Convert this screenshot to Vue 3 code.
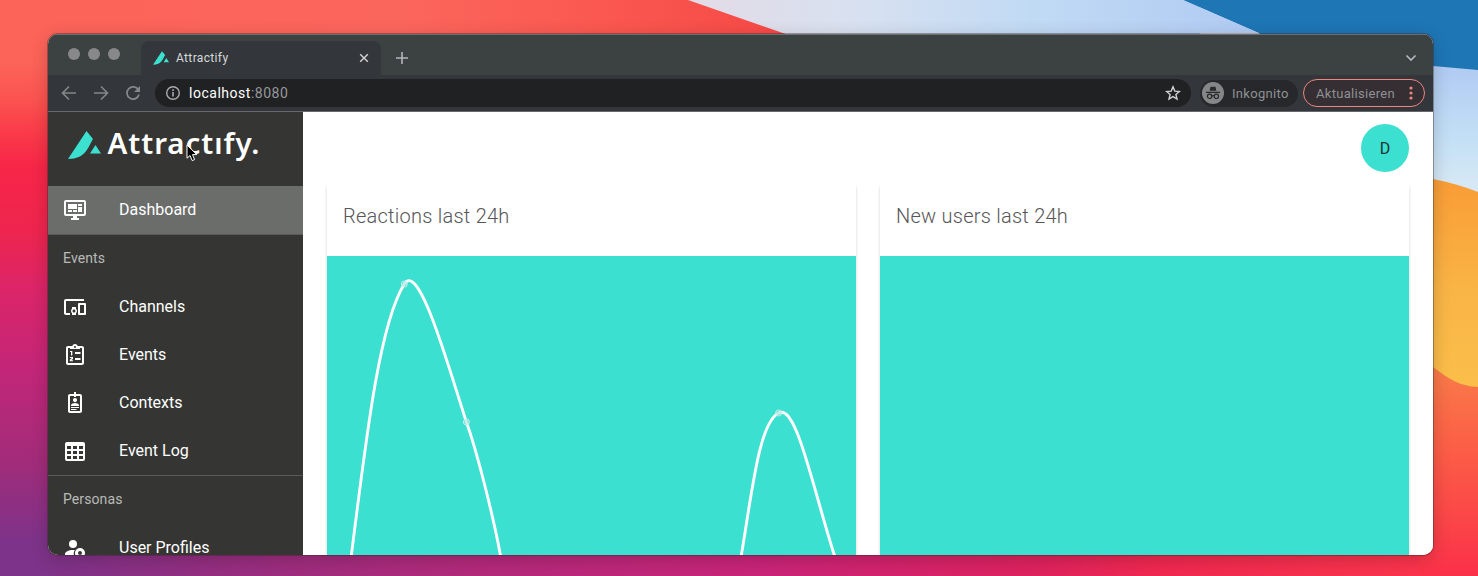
<script setup>
const icons = {
  dashboard: 'M21,16V4H3V16H21M21,2A2,2 0 0,1 23,4V16A2,2 0 0,1 21,18H14V20H16V22H8V20H10V18H3C1.89,18 1,17.1 1,16V4C1,2.89 1.89,2 3,2H21M5,6H14V11H5V6M15,6H19V8H15V6M19,9V14H15V9H19M5,12H9V14H5V12M10,12H14V14H10V12Z',
  channels: 'M3 6h18V4H3c-1.1 0-2 .9-2 2v12c0 1.1.9 2 2 2h4v-2H3V6zm10 6H9v1.78c-.61.55-1 1.33-1 2.22s.39 1.67 1 2.22V20h4v-1.78c.61-.55 1-1.34 1-2.22s-.39-1.67-1-2.22V12zm-2 5.5c-.83 0-1.5-.67-1.5-1.5s.67-1.5 1.5-1.5 1.5.67 1.5 1.5-.67 1.5-1.5 1.5zM22 8h-6c-.5 0-1 .5-1 1v10c0 .5.5 1 1 1h6c.5 0 1-.5 1-1V9c0-.5-.5-1-1-1zm-1 10h-4v-8h4v8z',
  events: 'M19 3h-4.2a3 3 0 0 0-5.6 0H5c-1.1 0-2 .9-2 2v15c0 1.1.9 2 2 2h14c1.1 0 2-.9 2-2V5c0-1.1-.9-2-2-2zm-7 0a1 1 0 1 1 0 2 1 1 0 0 1 0-2zm7 17H5V5h2v1h10V5h2v15zM12 9h5.5v2H12zM12 15h5.5v2H12zM7 8h2.3v4.5H8V9H7zM6.8 14h3.2v2l-1.8 1.2H10v1H6.8v-1.5L8.8 15h-2z',
  contexts: 'M17 3h-4V1h-2v2H7c-1.1 0-2 .9-2 2v15c0 1.1.9 2 2 2h10c1.1 0 2-.9 2-2V5c0-1.1-.9-2-2-2zm0 17H7V5h4v1h2V5h4v15zM12 7a2.1 2.1 0 1 0 0 4.2A2.1 2.1 0 0 0 12 7zM8 14.2c0-1.5 2.7-2.2 4-2.2s4 .7 4 2.2V15H8zM8 16h8v1H8zM8 18h5.5v1H8z',
  log: 'M4 3h16a2 2 0 0 1 2 2v15a2 2 0 0 1-2 2H4a2 2 0 0 1-2-2V5c0-1.1.9-2 2-2zm0 4v3h4V7zm6 0v3h4V7zm6 0v3h4V7zM4 12v3h4v-3zm6 0v3h4v-3zm6 0v3h4v-3zM4 17v3h4v-3zm6 0v3h4v-3zm6 0v3h4v-3z',
  profiles: 'M10 4a4 4 0 1 0 0 8 4 4 0 0 0 0-8zM17 12a5 5 0 1 0 0 10 5 5 0 0 0 0-10zm0 3a2 2 0 1 1 0 4 2 2 0 0 1 0-4zM10 14c-4.4 0-8 1.8-8 4v2h9.1a7 7 0 0 1 .7-5.9z',
}
const eventItems = [
  { label: 'Channels', icon: icons.channels },
  { label: 'Events', icon: icons.events },
  { label: 'Contexts', icon: icons.contexts },
  { label: 'Event Log', icon: icons.log },
]
const points = [[404.3, 284], [466.4, 422], [778.6, 413]]
</script>

<template>
  <div class="desktop">
    <svg class="wallpaper" viewBox="0 0 1478 576" width="1478" height="576">
      <defs>
        <linearGradient id="gl" x1="0" y1="0" x2="0" y2="1">
          <stop offset="0" stop-color="#fc6359" /><stop offset=".11" stop-color="#fc6359" />
          <stop offset=".17" stop-color="#fb5450" />
          <stop offset=".23" stop-color="#fa3b49" /><stop offset=".29" stop-color="#f72648" />
          <stop offset=".4" stop-color="#ee254e" /><stop offset=".5" stop-color="#dc2568" />
          <stop offset=".64" stop-color="#c32678" /><stop offset=".8" stop-color="#a22c7a" />
          <stop offset=".94" stop-color="#7d3389" /><stop offset="1" stop-color="#7d3389" />
        </linearGradient>
        <linearGradient id="gt" x1="0" y1="0" x2="1" y2="0">
          <stop offset="0" stop-color="#fc6359" /><stop offset=".5" stop-color="#fb665c" />
          <stop offset=".75" stop-color="#fa5850" /><stop offset="1" stop-color="#f64846" />
        </linearGradient>
        <linearGradient id="gb" x1="0" y1="0" x2="1" y2="0">
          <stop offset="0" stop-color="#7d3389" /><stop offset=".03" stop-color="#7d3389" /><stop offset=".14" stop-color="#942e80" />
          <stop offset=".3" stop-color="#b02a7b" /><stop offset=".52" stop-color="#ca2478" />
          <stop offset=".7" stop-color="#de225e" /><stop offset=".78" stop-color="#f02850" />
          <stop offset="1" stop-color="#fd374b" />
        </linearGradient>
        <linearGradient id="gw" x1="688" y1="0" x2="1259" y2="0" gradientUnits="userSpaceOnUse">
          <stop offset="0" stop-color="#e2dbe6" /><stop offset=".28" stop-color="#d9e1f0" />
          <stop offset=".6" stop-color="#c1daf4" /><stop offset="1" stop-color="#b0caf3" />
        </linearGradient>
        <linearGradient id="gs" x1="0" y1="0" x2="0" y2="1">
          <stop offset="0" stop-color="#b0caf3" /><stop offset=".5" stop-color="#c1def5" /><stop offset="1" stop-color="#dcebf5" />
        </linearGradient>
        <linearGradient id="go" x1="0" y1="0" x2="0" y2="1">
          <stop offset="0" stop-color="#f99b36" /><stop offset=".5" stop-color="#f9b446" /><stop offset="1" stop-color="#fbc04a" />
        </linearGradient>
        <linearGradient id="gr" x1="0" y1="0" x2="0" y2="1">
          <stop offset="0" stop-color="#f87e49" /><stop offset=".4" stop-color="#fc5f46" />
          <stop offset=".75" stop-color="#fb4548" /><stop offset="1" stop-color="#fb3049" />
        </linearGradient>
      </defs>
      <rect width="740" height="576" fill="url(#gl)" />
      <rect width="800" height="60" fill="url(#gt)" />
      <rect y="540" width="1478" height="36" fill="url(#gb)" />
      <path d="M688 0H1200V60H860Z" fill="url(#gw)" />
      <path d="M1183 0H1478V80H1365Z" fill="#1e76b5" />
      <path d="M1259 33L1100 33V0H1183Z" fill="url(#gw)" />
      <path d="M1420 65L1433 66L1478 70V200H1420Z" fill="url(#gs)" />
      <path d="M1420 176L1433 179Q1458 184 1478 192V400H1420Z" fill="url(#go)" />
      <path d="M1420 358L1433 367C1450 380 1460 386 1478 387V576H1420Z" fill="url(#gr)" />
    </svg>

    <div class="window">
      <div class="tabstrip">
        <div class="lights"><i></i><i></i><i></i></div>
        <div class="tab">
          <svg class="favicon" viewBox="0 0 33 28" width="16" height="14">
            <path d="M18.500 0L25 8C20 16 18 28 0 28Z" fill="#3be0d0" /><path d="M27.500 14L33 23H22Z" fill="#3be0d0" />
          </svg>
          <span class="tabname">Attractify</span>
          <svg viewBox="0 0 10 10" width="10" height="10"><path d="M1.2 1.2L8.8 8.8M8.8 1.2L1.2 8.8" stroke="#d2d4d6" stroke-width="1.4" /></svg>
        </div>
        <svg class="plus" viewBox="0 0 12 12" width="12" height="12"><path d="M6 0V12M0 6H12" stroke="#b4b7b9" stroke-width="1.6" /></svg>
        <svg class="chev" viewBox="0 0 12 8" width="12" height="8"><path d="M1.5 1.5L6 6L10.500 1.500" fill="none" stroke="#b8bbbd" stroke-width="1.6" /></svg>
      </div>

      <div class="toolbar">
        <svg viewBox="0 0 16 16" width="16" height="16"><path d="M15 8H2M8 1.500L1.500 8L8 14.500" fill="none" stroke="#85888b" stroke-width="1.6" /></svg>
        <svg viewBox="0 0 16 16" width="16" height="16"><path d="M1 8H14M8 1.500L14.500 8L8 14.500" fill="none" stroke="#85888b" stroke-width="1.6" /></svg>
        <svg viewBox="0 0 16 16" width="16" height="16"><path d="M13.400 5A6.100 6.100 0 1 0 14 9.500" fill="none" stroke="#85888b" stroke-width="1.7" /><path d="M15 1V7H9Z" fill="#85888b" /></svg>
        <div class="address">
          <svg viewBox="0 0 16 16" width="16" height="16"><circle cx="8" cy="8" r="6.300" fill="none" stroke="#a9abad" stroke-width="1.4" /><path d="M8 7V11.500M8 4.300V5.900" stroke="#a9abad" stroke-width="1.6" /></svg>
          <span class="url"><b>localhost</b>:8080</span>
          <svg viewBox="0 0 16 16" width="16" height="16"><path d="M8 1.800L9.800 6.100L14.400 6.500L10.900 9.500L12 14L8 11.600L4 14L5.100 9.500L1.600 6.500L6.200 6.100Z" fill="none" stroke="#d0d2d4" stroke-width="1.4" /></svg>
        </div>
        <div class="incognito">
          <svg viewBox="0 0 22 22" width="22" height="22">
            <circle cx="11" cy="11" r="11" fill="#858688" />
            <path d="M7.600 8.800L8.500 5Q9 4.200 10 4.700Q11 5.100 12 4.700Q13 4.200 13.500 5L14.400 8.800Z" fill="#28292b" />
            <path d="M4 10.400H18" stroke="#28292b" stroke-width="1.2" />
            <g fill="none" stroke="#28292b" stroke-width="1.200"><circle cx="7.600" cy="14.300" r="2.200" /><circle cx="14.400" cy="14.300" r="2.200" /><path d="M9.800 14Q11 13.200 12.200 14" /></g>
          </svg>
          <span>Inkognito</span>
        </div>
        <div class="update"><span>Aktualisieren</span>
          <svg viewBox="0 0 4 14" width="4" height="14" fill="#ee8680"><circle cx="2" cy="2" r="1.600" /><circle cx="2" cy="7" r="1.600" /><circle cx="2" cy="12" r="1.600" /></svg>
        </div>
      </div>

      <div class="page">
        <nav class="sidebar">
          <div class="brand">
            <svg viewBox="0 0 33 28" width="33" height="28">
              <path d="M18.500 0L25 8C20 16 18 28 0 28Z" fill="#3be0d0" /><path d="M27.500 14L33 22.500H22Z" fill="#3be0d0" />
            </svg>
            <span class="brandname">Attractıfy.</span>
          </div>
          <a class="item active"><svg viewBox="0 0 24 24" width="24" height="24"><path :d="icons.dashboard" /></svg><span>Dashboard</span></a>
          <div class="group">Events</div>
          <a v-for="it in eventItems" :key="it.label" class="item">
            <svg viewBox="0 0 24 24" width="24" height="24"><path fill-rule="evenodd" :d="it.icon" /></svg><span>{{ it.label }}</span>
          </a>
          <div class="group">Personas</div>
          <a class="item"><svg viewBox="0 0 24 24" width="24" height="24"><path fill-rule="evenodd" :d="icons.profiles" /></svg><span>User Profiles</span></a>
        </nav>
        <main class="content">
          <header class="appbar"><div class="avatar">D</div></header>
          <div class="cards">
            <section class="card">
              <h2>Reactions last 24h</h2>
              <svg class="chart" viewBox="327 256 529 299" width="529" height="299">
                <g fill="none" stroke="#fff" stroke-width="2.900">
                  <path d="M350.900 559L351.400 555C367 430 380 323 404.300 284C419 260 449 369 466.400 422C476 449 492 510 500.400 555L501.200 559" />
                  <path d="M740.800 559L741.400 555C752 492 759 423 778.600 413C796 403 812 485 834.300 555L835.500 559" />
                </g>
                <circle v-for="(p, i) in points" :key="i" :cx="p[0]" :cy="p[1]" r="3" fill="#9fdcd7" fill-opacity=".5" stroke="#c8efeb" stroke-width="1" />
              </svg>
            </section>
            <section class="card">
              <h2>New users last 24h</h2>
              <div class="chart"></div>
            </section>
          </div>
        </main>
      </div>
    </div>

    <svg class="cursor" viewBox="0 0 12 18" width="12" height="18">
      <path d="M1 1V14.200L4 11.500L6.200 16.600L8.600 15.600L6.500 10.600H10.800Z" fill="#000" stroke="#fff" stroke-width="1" />
    </svg>
  </div>
</template>

<style>
html, body { margin: 0; overflow: hidden; }
</style>

<style scoped>
.desktop { position: relative; box-sizing: border-box; width: 1478px; height: 576px; padding: 34px 45px 21px 48px; overflow: hidden; font-family: Roboto, "Liberation Sans", sans-serif; }
.wallpaper { position: absolute; left: 0; top: 0; }
svg { display: block; flex: none; }
.window { position: relative; height: 521px; border-radius: 10px; overflow: hidden; background: #fff; display: flex; flex-direction: column; box-shadow: 0 0 0 1px rgba(60, 40, 40, .4), 0 4px 18px rgba(0, 0, 0, .2); }
.tabstrip { height: 41px; flex: none; display: flex; align-items: flex-end; background: #3c4142; box-shadow: inset 0 1px #6a7172; }
.lights { display: flex; gap: 8px; padding: 0 21px 15px 20px; }
.lights i { width: 12px; height: 12px; border-radius: 50%; background: #88888a; }
.tab { box-sizing: border-box; width: 240px; height: 34px; border-radius: 8px 8px 0 0; background: #33373b; display: flex; align-items: center; padding: 0 12px 0 12px; }
.tabname { flex: 1; padding-left: 7px; font-size: 12px; letter-spacing: .35px; color: #d6d8da; }
.plus { margin: 0 0 11px 15px; }
.chev { margin: 0 16px 13px auto; }
.toolbar { box-sizing: border-box; height: 37px; flex: none; display: flex; align-items: center; background: #33373b; border-bottom: 1px solid #66686b; padding: 0 8px 0 13px; }
.toolbar > svg { margin-right: 16px; }
.address { flex: 1; height: 28px; border-radius: 14px; background: #202123; display: flex; align-items: center; padding: 0 10px; margin-left: -2px; }
.url { flex: 1; padding-left: 8px; font-size: 14px; letter-spacing: .52px; color: #96989b; }
.url b { font-weight: 400; color: #fff; }
.incognito { box-sizing: border-box; width: 98px; height: 27px; margin: 0 5px 0 9px; border-radius: 14px; background: #27282b; display: flex; align-items: center; gap: 8px; padding-left: 2px; font-size: 13px; letter-spacing: .3px; color: #8f9194; }
.update { box-sizing: border-box; width: 122px; height: 28px; border: 1px solid #ee8680; border-radius: 14px; background: #352e33; display: flex; align-items: center; justify-content: space-between; padding: 0 11px 0 12px; font-size: 13px; letter-spacing: .3px; color: #8f9194; }
.page { flex: 1; min-height: 0; display: flex; }
.sidebar { width: 255px; flex: none; background: #353633; overflow: hidden; }
.brand { height: 74px; box-sizing: border-box; display: flex; align-items: flex-start; padding: 19px 0 0 20px; }
.brandname { margin: -8px 0 0 6.500px; font: 600 29.500px/40px "Noto Sans", sans-serif; letter-spacing: .95px; color: #fff; white-space: nowrap; }
.item { box-sizing: border-box; height: 48px; display: flex; align-items: center; gap: 32px; padding-left: 15px; color: #fff; font-size: 16px; letter-spacing: 0; }
.item span { margin-top: -2px; }
.item svg { fill: #fff; }
.active { background: #6b6d6b; }
.group { box-sizing: border-box; height: 49px; border-top: 1px solid #5a5b59; padding: 0 0 0 15px; line-height: 46px; font-size: 14px; letter-spacing: .1px; color: #b9bab9; }
.content { flex: 1; background: #fff; padding: 0 24px; overflow: hidden; }
.appbar { height: 72px; display: flex; justify-content: flex-end; align-items: center; }
.avatar { width: 48px; height: 48px; border-radius: 50%; background: #3be0d0; color: #1e3532; font-size: 16px; line-height: 49px; text-align: center; }
.cards { display: grid; grid-template-columns: 529px 529px; gap: 24px; }
.card { box-shadow: 0 3px 3px rgba(0, 0, 0, .18); }
h2 { margin: 0; height: 72px; box-sizing: border-box; padding: 16px 16px 0; font-size: 20px; line-height: 32px; font-weight: 300; letter-spacing: .25px; color: #565656; }
.chart { height: 299px; background: #3be0d0; }
.cursor { position: absolute; left: 186px; top: 144px; }
</style>
